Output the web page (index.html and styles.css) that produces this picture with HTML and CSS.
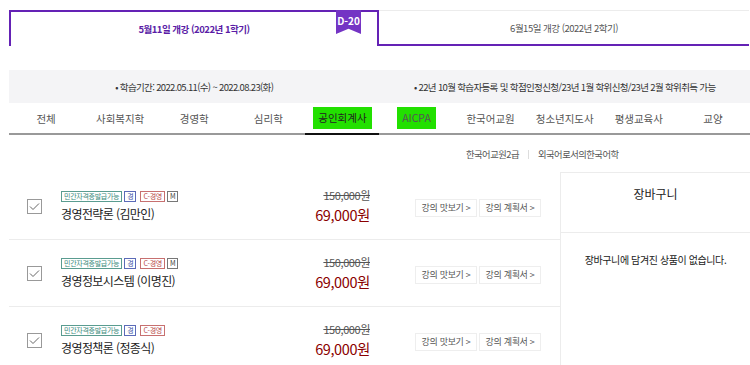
FILE: index.html
```html
<!DOCTYPE html>
<html lang="ko">
<head>
    <meta charset="UTF-8">
    <meta name="viewport" content="width=device-width, initial-scale=1.0">
    <title>수강신청</title>
    <link rel="stylesheet" href="styles.css">
</head>
<body>
    <div class="term-tabs">
        <div class="term-tab active">
            5월11일 개강 (2022년 1학기)
            <span class="dday">D-20</span>
        </div>
        <div class="term-tab">6월15일 개강 (2022년 2학기)</div>
    </div>

    <div class="info-bar">
        <div class="info-item">• 학습기간: 2022.05.11(수) ~ 2022.08.23(화)</div>
        <div class="info-item">• 22년 10월 학습자등록 및 학점인정신청/23년 1월 학위신청/23년 2월 학위취득 가능</div>
    </div>

    <ul class="cat-tabs">
        <li class="cat-tab"><span>전체</span></li>
        <li class="cat-tab"><span>사회복지학</span></li>
        <li class="cat-tab"><span>경영학</span></li>
        <li class="cat-tab"><span>심리학</span></li>
        <li class="cat-tab active"><span class="mark">공인회계사</span></li>
        <li class="cat-tab"><span class="mark">AICPA</span></li>
        <li class="cat-tab"><span>한국어교원</span></li>
        <li class="cat-tab"><span>청소년지도사</span></li>
        <li class="cat-tab"><span>평생교육사</span></li>
        <li class="cat-tab"><span>교양</span></li>
    </ul>

    <div class="sub-tabs">
        <span class="sub-tab">한국어교원2급</span>
        <span class="sub-sep"></span>
        <span class="sub-tab">외국어로서의한국어학</span>
    </div>

    <div class="content">
        <div class="course-list">
            <div class="course">
                <span class="check"><svg width="11" height="9" viewBox="0 0 11 9"><path d="M1 4.5 L4 7.5 L10 1.5" fill="none" stroke="#666" stroke-width="1"/></svg></span>
                <div class="course-info">
                    <div class="tags">
                        <span class="tag tag-green">민간자격증발급가능</span>
                        <span class="tag tag-blue">경</span>
                        <span class="tag tag-red">C-경영</span>
                        <span class="tag tag-gray">M</span>
                    </div>
                    <div class="course-title">경영전략론 (김만인)</div>
                </div>
                <div class="price">
                    <div class="price-old">150,000원</div>
                    <div class="price-new">69,000원</div>
                </div>
                <div class="btns">
                    <a class="btn">강의 맛보기 &gt;</a>
                    <a class="btn">강의 계획서 &gt;</a>
                </div>
            </div>
            <div class="course">
                <span class="check"><svg width="11" height="9" viewBox="0 0 11 9"><path d="M1 4.5 L4 7.5 L10 1.5" fill="none" stroke="#666" stroke-width="1"/></svg></span>
                <div class="course-info">
                    <div class="tags">
                        <span class="tag tag-green">민간자격증발급가능</span>
                        <span class="tag tag-blue">경</span>
                        <span class="tag tag-red">C-경영</span>
                        <span class="tag tag-gray">M</span>
                    </div>
                    <div class="course-title">경영정보시스템 (이명진)</div>
                </div>
                <div class="price">
                    <div class="price-old">150,000원</div>
                    <div class="price-new">69,000원</div>
                </div>
                <div class="btns">
                    <a class="btn">강의 맛보기 &gt;</a>
                    <a class="btn">강의 계획서 &gt;</a>
                </div>
            </div>
            <div class="course">
                <span class="check"><svg width="11" height="9" viewBox="0 0 11 9"><path d="M1 4.5 L4 7.5 L10 1.5" fill="none" stroke="#666" stroke-width="1"/></svg></span>
                <div class="course-info">
                    <div class="tags">
                        <span class="tag tag-green">민간자격증발급가능</span>
                        <span class="tag tag-blue">경</span>
                        <span class="tag tag-red">C-경영</span>
                    </div>
                    <div class="course-title">경영정책론 (정종식)</div>
                </div>
                <div class="price">
                    <div class="price-old">150,000원</div>
                    <div class="price-new">69,000원</div>
                </div>
                <div class="btns">
                    <a class="btn">강의 맛보기 &gt;</a>
                    <a class="btn">강의 계획서 &gt;</a>
                </div>
            </div>
        </div>

        <div class="cart">
            <div class="cart-title">장바구니</div>
            <div class="cart-empty">장바구니에 담겨진 상품이 없습니다.</div>
        </div>
    </div>
</body>
</html>
```

FILE: styles.css
```css
:root {
    --purple: #6422b5;
    --purple-text: #5a1ca6;
    --mark-green: #22e000;
    --price-red: #8b0000;
    --line: #ececec;
}

body {
    font-family: "Noto Sans CJK KR", "Noto Sans", sans-serif;
    margin: 0;
    padding: 0;
    color: #333;
    background: #fff;
    width: 750px;
    overflow: hidden;
}

/* 학기 탭 */
.term-tabs {
    display: flex;
    margin: 10px 0 0 9px;
}

.term-tab {
    position: relative;
    box-sizing: border-box;
    width: 370px;
    height: 36px;
    display: flex;
    justify-content: center;
    align-items: center;
    font-size: 9.5px;
    color: #555;
    border-top: 1px solid var(--line);
    border-bottom: 2px solid var(--purple);
    letter-spacing: -0.5px;
}

.term-tab.active {
    border: 2px solid var(--purple);
    border-bottom: none;
    color: var(--purple-text);
    font-weight: 700;
}

.dday {
    position: absolute;
    top: -2px;
    right: 16px;
    width: 25px;
    height: 24px;
    padding-top: 3px;
    box-sizing: border-box;
    background: #7434c4;
    color: #fff;
    font-size: 10px;
    font-weight: 700;
    text-align: center;
    letter-spacing: 0;
    clip-path: polygon(0 0, 100% 0, 100% 100%, 50% 78%, 0 100%);
}

/* 안내 바 */
.info-bar {
    display: flex;
    margin: 24px 0 0 9px;
    height: 33px;
    background: #f4f4f6;
}

.info-item {
    flex: 1;
    display: flex;
    justify-content: center;
    align-items: center;
    font-size: 9.5px;
    color: #333;
    letter-spacing: -0.65px;
}

/* 과정 탭 */
.cat-tabs {
    list-style: none;
    display: flex;
    margin: 0 0 0 9px;
    padding: 0;
    border-bottom: 2px solid #999;
}

.cat-tab {
    flex: 1;
    height: 30px;
    display: flex;
    justify-content: center;
    align-items: center;
    font-size: 10.5px;
    color: #555;
    margin-bottom: -2px;
    border-bottom: 2px solid transparent;
}

.cat-tab.active {
    border-bottom-color: #111;
    color: #222;
}

.mark {
    background: var(--mark-green);
    padding: 3px 5px;
    line-height: 16px;
}

/* 하위 탭 */
.sub-tabs {
    display: flex;
    align-items: center;
    height: 38px;
    padding-left: 466px;
    font-size: 9.3px;
    color: #555;
    letter-spacing: -0.5px;
}

.sub-sep {
    width: 1px;
    height: 9px;
    background: #ddd;
    margin: 0 9px;
}

/* 강좌 목록 */
.content {
    display: flex;
    margin-left: 9px;
}

.course-list {
    width: 551px;
}

.course {
    display: flex;
    align-items: center;
    height: 66px;
    padding-left: 18px;
    border-bottom: 1px solid var(--line);
}

.check {
    width: 13px;
    height: 13px;
    border: 1px solid #999;
    display: flex;
    justify-content: center;
    align-items: center;
    margin-right: 19px;
    flex-shrink: 0;
}

.course-info {
    width: 210px;
    margin-top: 0;
}

.tags {
    display: flex;
    gap: 2px;
    margin-bottom: 3px;
}

.tag {
    font-size: 7px;
    line-height: 9px;
    height: 9px;
    padding: 0 2px;
    border: 1px solid;
    letter-spacing: -0.3px;
}

.tag-green { color: #3a8a7c; border-color: #5a9c90; }
.tag-blue { color: #3a4fa8; border-color: #5b6bb8; }
.tag-red { color: #b84848; border-color: #c77070; margin-left: 2px; }
.tag-gray { color: #444; border-color: #777; }

.course-title {
    font-size: 12px;
    color: #222;
    letter-spacing: -0.6px;
}

.price {
    width: 99px;
    text-align: right;
}

.price-old {
    font-size: 11px;
    color: #555;
    text-decoration: line-through;
    letter-spacing: -0.4px;
}

.price-new {
    font-size: 14.5px;
    color: var(--price-red);
    line-height: 20px;
    margin-top: 2px;
    letter-spacing: -0.4px;
}

.btns {
    display: flex;
    gap: 2px;
    margin: 3px 0 0 45px;
}

.btn {
    width: 62px;
    height: 18px;
    box-sizing: border-box;
    border: 1px solid #eee;
    display: flex;
    justify-content: center;
    align-items: center;
    font-size: 9px;
    color: #555;
    letter-spacing: -0.3px;
}

/* 장바구니 */
.cart {
    flex: 1;
    border: 1px solid var(--line);
    border-right: none;
    margin-top: -1px;
    height: 200px;
}

.cart-title {
    height: 60px;
    padding-top: 12px;
    box-sizing: border-box;
    text-align: center;
    font-size: 12px;
    color: #222;
    border-bottom: 1px solid var(--line);
}

.cart-empty {
    padding-top: 19px;
    text-align: center;
    font-size: 10px;
    color: #222;
    letter-spacing: -0.4px;
}
```
